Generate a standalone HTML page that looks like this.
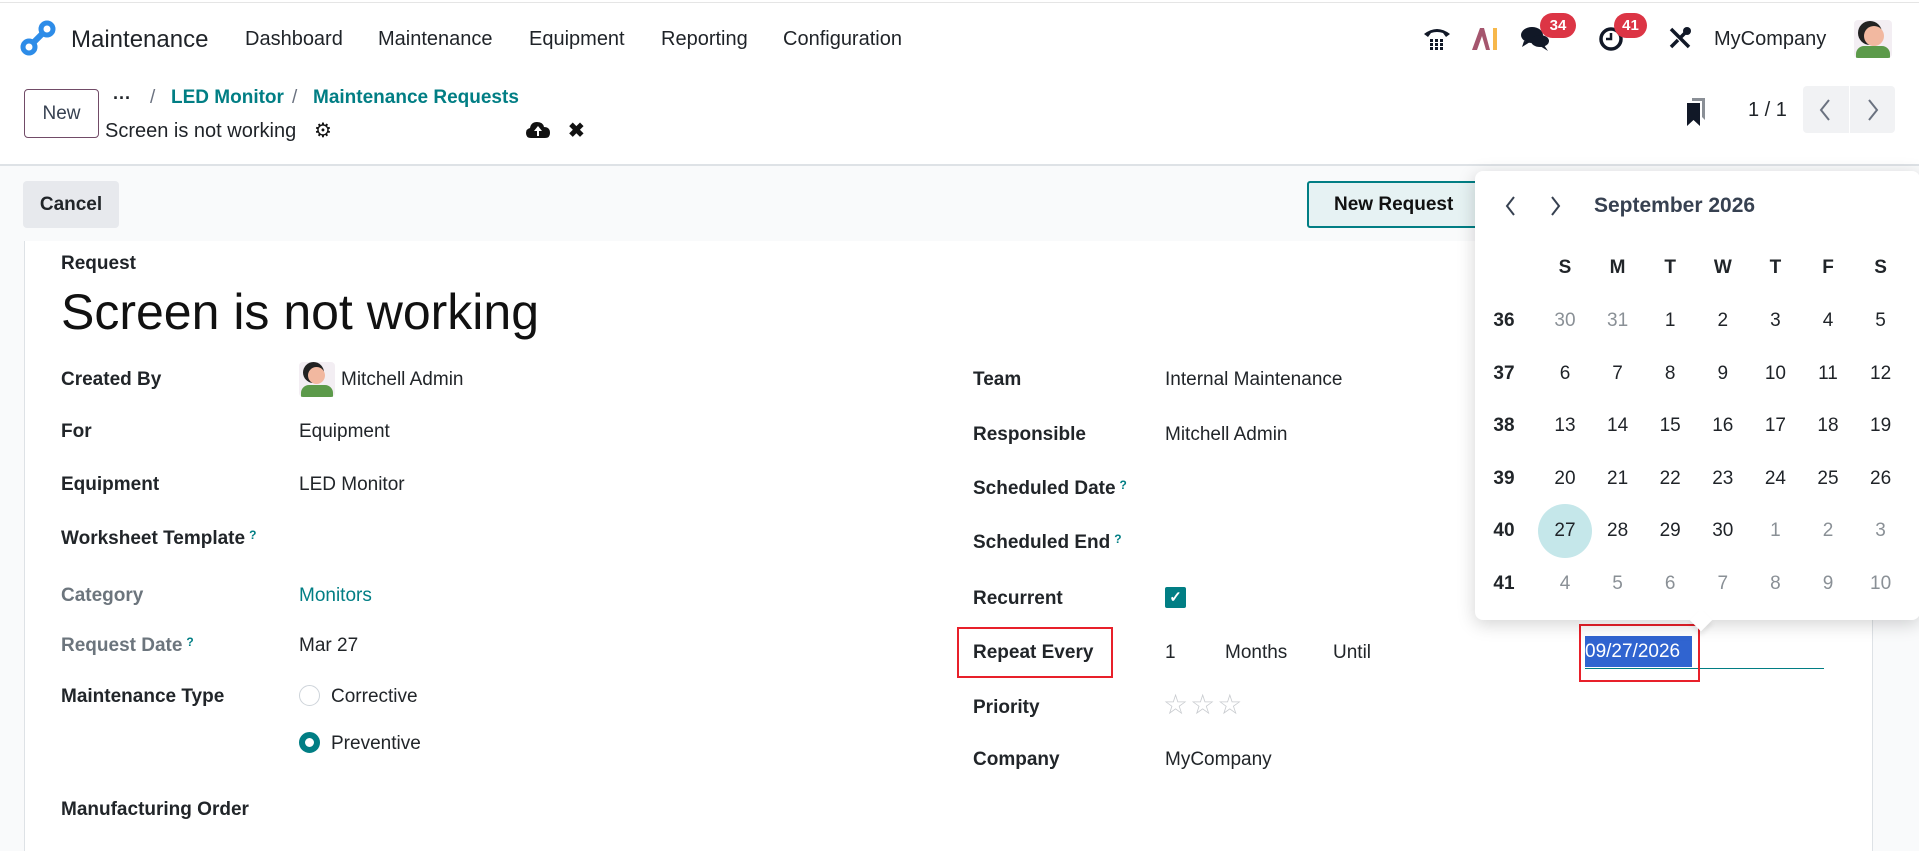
<!DOCTYPE html>
<html><head><meta charset="utf-8"><style>
*{margin:0;padding:0;box-sizing:border-box}
body{width:1919px;height:841px;overflow:hidden;background:#f9fafb;font-family:"Liberation Sans",sans-serif;color:#1f2328;position:relative}
.a{position:absolute;white-space:nowrap}
.nav{font-size:20px;top:28px;color:#1f2328}
.lbl{font-size:19px;font-weight:bold;color:#212529}
.val{font-size:19px;color:#212529}
.q{color:#017e84;font-size:12px;vertical-align:top;font-weight:bold;margin-left:4px}
.cal{font-size:19px;text-align:center;width:40px;margin-left:-20px}
.wk{font-weight:bold;color:#212529}
.mut{color:#8a9096}
</style></head><body>
<div class="a" style="left:0;top:0;width:1919px;height:166px;background:#fff;border-bottom:2px solid #dee2e6"></div>
<div class="a" style="left:0;top:2px;width:1919px;height:1px;background:#e5e5e5"></div>
<svg class="a" style="left:20px;top:20px" width="36" height="36" viewBox="0 0 36 36"><circle cx="27" cy="9" r="6" fill="none" stroke="#2d8ce8" stroke-width="5"/><circle cx="9" cy="27" r="6" fill="none" stroke="#2d8ce8" stroke-width="5"/><path d="M13 23L23 13" stroke="#2d8ce8" stroke-width="6"/></svg>
<div class="a" style="left:71px;top:26px;font-size:24px">Maintenance</div>
<div class="a nav" style="left:245px">Dashboard</div>
<div class="a nav" style="left:378px">Maintenance</div>
<div class="a nav" style="left:529px">Equipment</div>
<div class="a nav" style="left:661px">Reporting</div>
<div class="a nav" style="left:783px">Configuration</div>
<svg class="a" style="left:1422px;top:24px" width="30" height="28" viewBox="0 0 30 28"><path d="M2 10Q15 0 28 10L24 13L21 9Q15 7 9 9L6 13Z" fill="#111827"/><g fill="#111827"><rect x="8" y="15" width="3" height="3"/><rect x="13" y="15" width="3" height="3"/><rect x="18" y="15" width="3" height="3"/><rect x="8" y="19" width="3" height="3"/><rect x="13" y="19" width="3" height="3"/><rect x="18" y="19" width="3" height="3"/><rect x="8" y="23" width="3" height="3"/><rect x="13" y="23" width="3" height="3"/><rect x="18" y="23" width="3" height="3"/></g></svg>
<svg class="a" style="left:1472px;top:26px" width="28" height="24" viewBox="0 0 28 24"><path d="M0 24L8 2H12L18 24H14L10 10L5 24Z" fill="#a5566e"/><rect x="21" y="2" width="4" height="22" fill="#f7b84b"/></svg>
<svg class="a" style="left:1520px;top:25px" width="32" height="28" viewBox="0 0 32 28"><ellipse cx="12" cy="10" rx="11" ry="8" fill="#111827"/><path d="M4 16L2 22L10 17Z" fill="#111827"/><ellipse cx="20" cy="16" rx="9" ry="6" fill="#111827"/><path d="M24 20L28 26L20 21Z" fill="#111827"/></svg>
<div class="a" style="left:1540px;top:13px;width:36px;height:25px;border-radius:13px;background:#dc3545;color:#fff;font-weight:bold;font-size:15px;text-align:center;line-height:25px">34</div>
<svg class="a" style="left:1598px;top:24px" width="28" height="28" viewBox="0 0 28 28"><circle cx="13" cy="15" r="10" fill="none" stroke="#111827" stroke-width="3.5"/><path d="M13 9V15H8" fill="none" stroke="#111827" stroke-width="2.5"/></svg>
<div class="a" style="left:1614px;top:13px;width:33px;height:25px;border-radius:13px;background:#dc3545;color:#fff;font-weight:bold;font-size:15px;text-align:center;line-height:25px">41</div>
<svg class="a" style="left:1668px;top:26px" width="24" height="24" viewBox="0 0 24 24"><path d="M3 3L21 21M21 3L13 11M3 21L10 14" stroke="#111827" stroke-width="3.5"/><circle cx="19" cy="5" r="4" fill="#111827"/></svg>
<div class="a nav" style="left:1714px">MyCompany</div>
<div class="a" style="left:1854px;top:20px;width:38px;height:38px;border-radius:4px;background:#f3eef3;overflow:hidden"><div style="position:absolute;left:10px;top:6px;width:20px;height:20px;border-radius:50%;background:#f2b8a0;box-shadow:-4px -3px 0 2px #222"></div><div style="position:absolute;left:2px;top:26px;width:34px;height:14px;border-radius:8px 8px 0 0;background:#5c9a4a"></div></div>
<div class="a" style="left:24px;top:89px;width:75px;height:49px;border:1px solid #714b67;border-radius:4px;font-size:19px;text-align:center;line-height:47px;color:#374151">New</div>
<div class="a" style="left:113px;top:88px;font-size:18px;font-weight:bold">···</div>
<div class="a" style="left:150px;top:87px;font-size:19px;color:#6b7280">/</div>
<div class="a" style="left:171px;top:87px;font-size:19px;color:#017e84;font-weight:bold">LED Monitor</div>
<div class="a" style="left:292px;top:87px;font-size:19px;color:#6b7280">/</div>
<div class="a" style="left:313px;top:87px;font-size:19px;color:#017e84;font-weight:bold">Maintenance Requests</div>
<div class="a" style="left:105px;top:120px;font-size:20px">Screen is not working</div>
<div class="a" style="left:314px;top:118px;font-size:20px;color:#111">⚙</div>
<svg class="a" style="left:526px;top:121px" width="24" height="18" viewBox="0 0 24 18"><path d="M5 17Q0 17 0 12Q0 8 4 7Q5 1 11 1Q17 1 18 6Q24 6 24 12Q24 17 19 17Z" fill="#111"/><path d="M12 5L8 10H11V15H13V10H16Z" fill="#fff"/></svg>
<div class="a" style="left:568px;top:118px;font-size:20px;font-weight:bold;color:#111">✖</div>
<svg class="a" style="left:1685px;top:98px" width="22" height="28" viewBox="0 0 22 28"><path d="M7 0H20V22L17 19V3H7Z" fill="#8a8f96"/><path d="M2 5H15V28L8.5 22L2 28Z" fill="#111827"/></svg>
<div class="a" style="left:1748px;top:99px;font-size:20px">1 / 1</div>
<div class="a" style="left:1803px;top:86px;width:92px;height:47px;background:#f1f2f4;border-radius:4px"></div>
<div class="a" style="left:1849px;top:86px;width:1px;height:47px;background:#fff"></div>
<svg class="a" style="left:1815px;top:98px" width="70" height="24" viewBox="0 0 70 24"><path d="M14 2L6 12L14 22M54 2L62 12L54 22" fill="none" stroke="#6b7280" stroke-width="2"/></svg>
<div class="a" style="left:23px;top:181px;width:96px;height:47px;background:#e7e9ed;border-radius:4px;font-size:19px;text-align:center;line-height:47px;font-weight:bold;color:#212529">Cancel</div>
<div class="a" style="left:1307px;top:181px;width:180px;height:47px;background:#e6f2f3;border:2px solid #017e84;border-radius:3px;font-size:19px;line-height:43px;padding-left:25px;font-weight:bold;color:#111">New Request</div>
<div class="a" style="left:24px;top:241px;width:1849px;height:610px;background:#fff;border-left:1px solid #dee2e6;border-right:1px solid #dee2e6"></div>
<div class="a" style="left:61px;top:253px;font-size:19px;font-weight:bold">Request</div>
<div class="a" style="left:61px;top:283px;font-size:50px;color:#111">Screen is not working</div>
<div class="a lbl" style="left:61px;top:369px">Created By</div>
<div class="a" style="left:299px;top:362px;width:36px;height:35px;border-radius:4px;background:#f3eef3;overflow:hidden"><div style="position:absolute;left:9px;top:5px;width:17px;height:17px;border-radius:50%;background:#f2b8a0;box-shadow:-3px -3px 0 2px #222"></div><div style="position:absolute;left:2px;top:23px;width:32px;height:14px;border-radius:8px 8px 0 0;background:#5c9a4a"></div></div>
<div class="a val" style="left:341px;top:369px">Mitchell Admin</div>
<div class="a lbl" style="left:61px;top:421px">For</div>
<div class="a val" style="left:299px;top:421px">Equipment</div>
<div class="a lbl" style="left:61px;top:474px">Equipment</div>
<div class="a val" style="left:299px;top:474px">LED Monitor</div>
<div class="a lbl" style="left:61px;top:528px">Worksheet Template<span class="q">?</span></div>
<div class="a lbl" style="left:61px;top:585px;color:#6c757d">Category</div>
<div class="a val" style="left:299px;top:585px;color:#017e84">Monitors</div>
<div class="a lbl" style="left:61px;top:635px;color:#6c757d">Request Date<span class="q">?</span></div>
<div class="a val" style="left:299px;top:635px">Mar 27</div>
<div class="a lbl" style="left:61px;top:686px">Maintenance Type</div>
<div class="a" style="left:299px;top:685px;width:21px;height:21px;border-radius:50%;border:1px solid #ced4da"></div>
<div class="a val" style="left:331px;top:686px">Corrective</div>
<div class="a" style="left:299px;top:732px;width:21px;height:21px;border-radius:50%;border:6px solid #017e84"></div>
<div class="a val" style="left:331px;top:733px">Preventive</div>
<div class="a lbl" style="left:61px;top:799px">Manufacturing Order</div>
<div class="a lbl" style="left:973px;top:369px">Team</div>
<div class="a val" style="left:1165px;top:369px">Internal Maintenance</div>
<div class="a lbl" style="left:973px;top:424px">Responsible</div>
<div class="a val" style="left:1165px;top:424px">Mitchell Admin</div>
<div class="a lbl" style="left:973px;top:478px">Scheduled Date<span class="q">?</span></div>
<div class="a lbl" style="left:973px;top:532px">Scheduled End<span class="q">?</span></div>
<div class="a lbl" style="left:973px;top:588px">Recurrent</div>
<div class="a" style="left:1165px;top:587px;width:21px;height:21px;background:#017e84;border-radius:2px;color:#fff;font-size:15px;text-align:center;line-height:21px;font-weight:bold">✓</div>
<div class="a" style="left:957px;top:627px;width:156px;height:51px;border:2px solid #e8202a"></div>
<div class="a lbl" style="left:973px;top:642px">Repeat Every</div>
<div class="a val" style="left:1165px;top:642px">1</div>
<div class="a val" style="left:1225px;top:642px">Months</div>
<div class="a val" style="left:1333px;top:642px">Until</div>
<div class="a" style="left:1585px;top:668px;width:239px;height:1px;background:#017e84"></div>
<div class="a" style="left:1585px;top:636px;width:107px;height:31px;background:#3064d0"></div>
<div class="a val" style="left:1585px;top:641px;color:#fff">09/27/2026</div>
<div class="a" style="left:1579px;top:624px;width:121px;height:58px;border:2px solid #e8202a"></div>
<div class="a lbl" style="left:973px;top:697px">Priority</div>
<div class="a" style="left:1163px;top:688px;font-size:28px;color:#c8cbcf;letter-spacing:2px">☆☆☆</div>
<div class="a lbl" style="left:973px;top:749px">Company</div>
<div class="a val" style="left:1165px;top:749px">MyCompany</div>
<div class="a" style="left:1475px;top:171px;width:445px;height:449px;background:#fff;border-radius:8px;box-shadow:0 4px 18px rgba(0,0,0,.18)"></div>
<div class="a" style="left:1693px;top:612px;width:16px;height:16px;background:#fff;transform:rotate(45deg);box-shadow:3px 3px 5px rgba(0,0,0,.08)"></div>
<svg class="a" style="left:1500px;top:194px" width="70" height="24" viewBox="0 0 70 24"><path d="M14 3L7 12L14 21M52 3L59 12L52 21" fill="none" stroke="#374151" stroke-width="2"/></svg>
<div class="a" style="left:1594px;top:194px;font-size:21px;font-weight:bold;color:#374151">September 2026</div>
<div class="a" style="left:1538px;top:504px;width:54px;height:54px;border-radius:50%;background:#c5e7ea"></div>
<div id="cal"></div>
<script>
(function(){
var h='';var cols=['S','M','T','W','T','F','S'];
for(var i=0;i<7;i++)h+='<div class="a cal wk" style="left:'+(1565+52.6*i)+'px;top:257px">'+cols[i]+'</div>';
var rows=[[36,[30,31,1,2,3,4,5],[1,1,0,0,0,0,0]],[37,[6,7,8,9,10,11,12],[0,0,0,0,0,0,0]],[38,[13,14,15,16,17,18,19],[0,0,0,0,0,0,0]],[39,[20,21,22,23,24,25,26],[0,0,0,0,0,0,0]],[40,[27,28,29,30,1,2,3],[0,0,0,0,1,1,1]],[41,[4,5,6,7,8,9,10],[1,1,1,1,1,1,1]]];
for(var r=0;r<6;r++){var y=310+52.6*r;h+='<div class="a cal wk" style="left:1504px;top:'+y+'px">'+rows[r][0]+'</div>';
for(var c=0;c<7;c++)h+='<div class="a cal'+(rows[r][2][c]?' mut':'')+'" style="left:'+(1565+52.6*c)+'px;top:'+y+'px">'+rows[r][1][c]+'</div>';}
document.getElementById('cal').innerHTML=h;})();
</script>
</body></html>
